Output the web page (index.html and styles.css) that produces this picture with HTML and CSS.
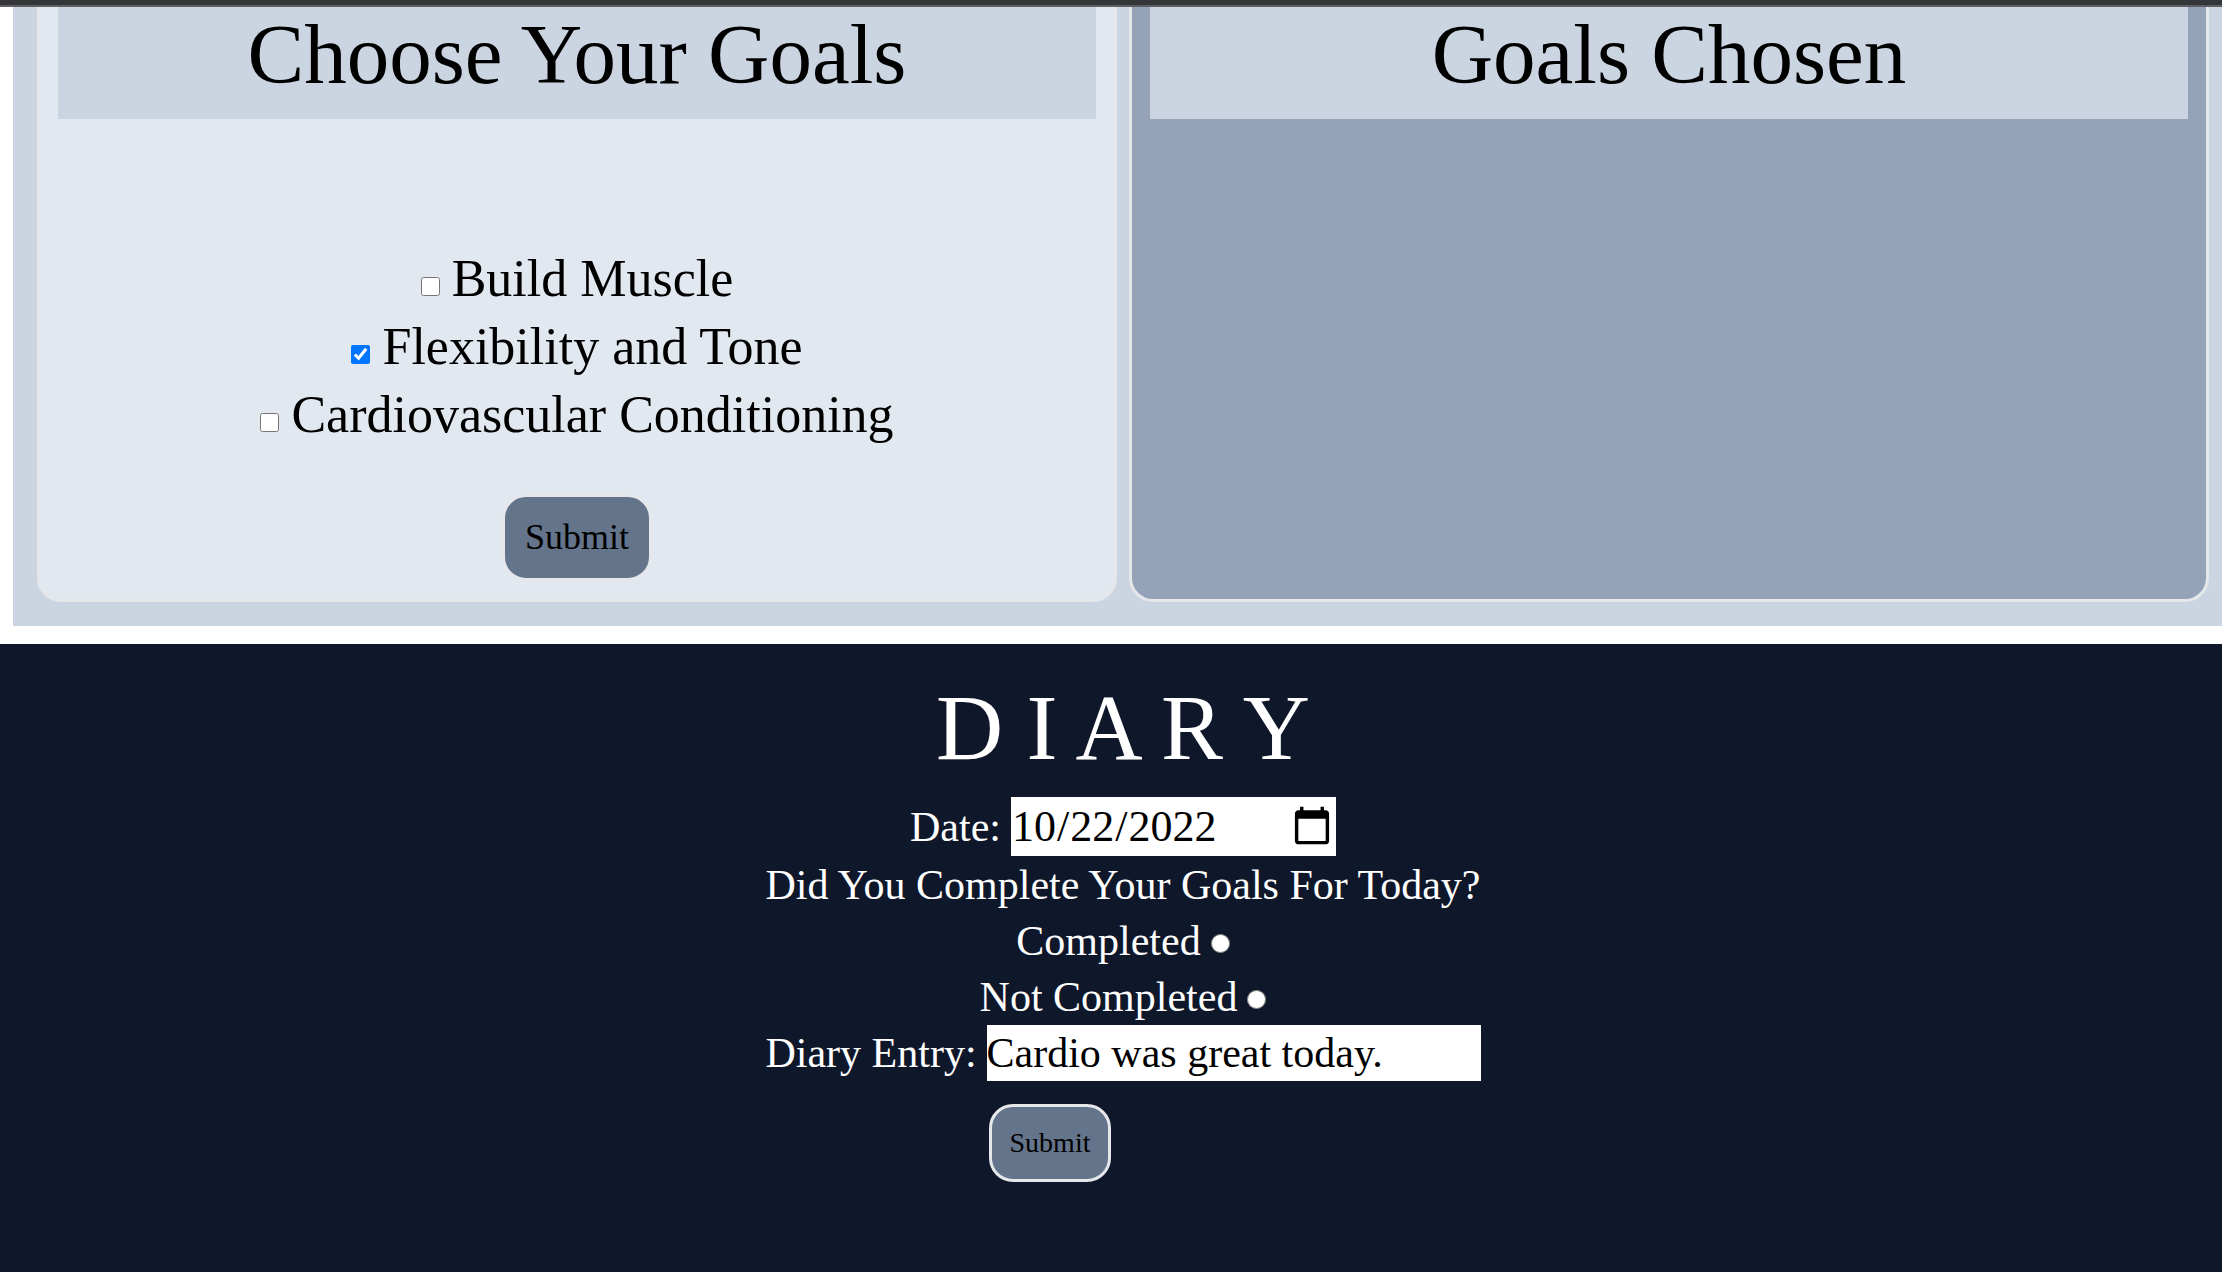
FILE: index.html
```html
<!DOCTYPE html>
<html lang="en-US">
<head>
  <meta charset="utf-8">
  <meta name="viewport" content="width=device-width, initial-scale=1">
  <title>Goals and Diary</title>
  <link rel="stylesheet" href="styles.css">
</head>
<body>
  <div class="top-bar"></div>
  <main>
    <section class="goals">
      <form class="panel panel-choose">
        <h2 class="panel-title">Choose Your Goals</h2>
        <div class="goal-list">
          <label class="goal"><input class="tick" type="checkbox" name="muscle">Build Muscle</label>
          <label class="goal"><input class="tick" type="checkbox" name="flexibility" checked>Flexibility and Tone</label>
          <label class="goal"><input class="tick" type="checkbox" name="cardio">Cardiovascular Conditioning</label>
        </div>
        <button class="button button-large" type="button">Submit</button>
      </form>
      <div class="panel panel-chosen">
        <h2 class="panel-title">Goals Chosen</h2>
      </div>
    </section>
    <section class="diary">
      <h1 class="diary-title">D I A R Y</h1>
      <form class="diary-form">
        <div class="row row-date">
          <label for="date">Date:</label>
          <input class="field field-date" id="date" type="date" value="2022-10-22">
        </div>
        <p class="row">Did You Complete Your Goals For Today?</p>
        <label class="row">Completed<input class="radio" type="radio" name="status"></label>
        <label class="row">Not Completed<input class="radio" type="radio" name="status"></label>
        <div class="row">
          <label for="entry">Diary Entry:</label>
          <input class="field field-entry" id="entry" type="text" value="Cardio was great today.">
        </div>
        <button class="button button-small" type="button">Submit</button>
      </form>
    </section>
  </main>
</body>
</html>
```
FILE: styles.css
```css
* {
  box-sizing: border-box;
}

body {
  margin: 0;
  min-height: 100vh;
  display: flex;
  flex-direction: column;
  background: #fff;
  color: #000;
  font-family: "Liberation Serif", serif;
}

h1,
h2,
p {
  margin: 0;
  font-weight: 400;
}

main {
  flex: 1;
  display: flex;
  flex-direction: column;
}

.top-bar {
  height: 7px;
  background: #35363a;
  border-bottom: 2px solid #5f5f63;
}

/* Goals */
.goals {
  display: grid;
  grid-template-columns: 1fr 1fr;
  gap: 12px;
  margin: 0 0 18px 13px;
  padding: 0 13px 24px 24px;
  background: #cbd5e1;
}

.panel {
  display: flex;
  flex-direction: column;
  align-items: center;
  padding: 0 18px 18px;
  border: 3px solid #e5e7eb;
  border-top: 0;
  border-radius: 0 0 24px 24px;
}

.panel-choose {
  background: #e2e8f0;
}

.panel-chosen {
  background: #94a3b8;
}

.panel-title {
  align-self: stretch;
  padding-bottom: 18px;
  background: #cbd5e1;
  font-size: 85px;
  line-height: 94px;
  text-align: center;
}

.goal-list {
  display: flex;
  flex-direction: column;
  align-items: center;
  margin: 126px 0 45px;
  font-size: 52px;
  line-height: 68px;
}

.tick {
  width: 19px;
  height: 19px;
  margin: 0 12px 2px 0;
}

.button {
  border: 3px solid #e5e7eb;
  border-radius: 24px;
  background: #64748b;
  color: #000;
  font-family: inherit;
}

.button-large {
  padding: 18px 20px;
  font-size: 36px;
  line-height: 45px;
}

.button-small {
  margin: 23px 146px 0 0;
  padding: 18px;
  font-size: 28px;
  line-height: 36px;
}

/* Diary */
.diary {
  flex: 1;
  padding: 36px 0 90px 24px;
  background: #0f172a;
  color: #fff;
}

.diary-title {
  margin-bottom: 21px;
  font-size: 93px;
  line-height: 96px;
  text-align: center;
}

.diary-form {
  display: flex;
  flex-direction: column;
  align-items: center;
  font-size: 42px;
  line-height: 56px;
}

.row {
  display: flex;
  align-items: center;
  gap: 10px;
}

.field {
  height: 56px;
  padding: 0;
  border: 0;
  background: #fff;
  color: #000;
  font: inherit;
}

.row-date {
  margin-bottom: 1px;
}

.field-date {
  width: 325px;
  height: 59px;
  font-size: 44px;
}

.field-entry {
  width: 494px;
}

.radio {
  width: 19px;
  height: 19px;
  margin: 4px 0 0;
}
```
